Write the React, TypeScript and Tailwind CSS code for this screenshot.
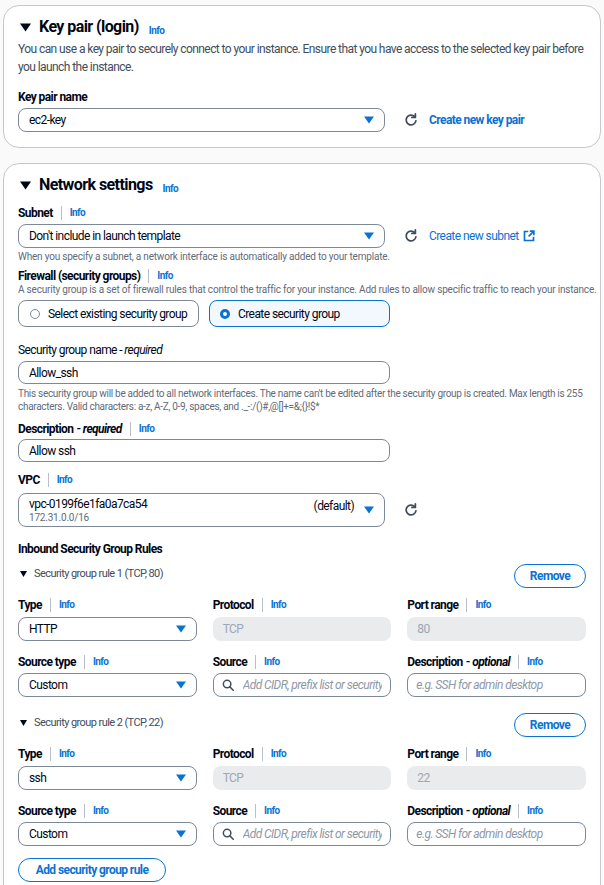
import React from "react";

const blue = "text-[#0972d3]";

function Info() {
  return <span className={`text-[10px] font-bold ${blue}`}>Info</span>;
}

function Label({ text, note, info = true }: { text: string; note?: string; info?: boolean }) {
  return (
    <div className="flex h-[14px] items-center whitespace-nowrap text-[12px] leading-[14px] text-[#000716]">
      <span className="font-bold">{text}</span>
      {note && <span className="ml-[3px] font-bold italic">- {note}</span>}
      {info && (
        <>
          <span className="mx-[8px] h-[14px] w-px bg-[#b6bec9]" />
          <Info />
        </>
      )}
    </div>
  );
}

function Caret() {
  return (
    <svg width="10" height="8" viewBox="0 0 10 8" className="shrink-0">
      <path d="M0 0.5h10L5 7.5z" fill="#0972d3" />
    </svg>
  );
}

function Refresh() {
  return (
    <svg width="14" height="14" viewBox="0 0 16 16" fill="none" className="shrink-0">
      <path d="M13.6 9a5.6 5.6 0 1 1-1.6-5" stroke="#414d5c" strokeWidth="2" strokeLinecap="round" />
      <path d="M13 1v4h-4" stroke="#414d5c" strokeWidth="2" strokeLinejoin="round" strokeLinecap="round" />
    </svg>
  );
}

function External() {
  return (
    <svg width="12" height="12" viewBox="0 0 16 16" fill="none" className="ml-[4px] shrink-0">
      <path d="M7 2H2v12h12V9" stroke="#0972d3" strokeWidth="2.2" />
      <path d="M9 1.5h5.5V7M14.5 1.5 7.5 8.5" stroke="#0972d3" strokeWidth="2.2" />
    </svg>
  );
}

function Search() {
  return (
    <svg width="12" height="12" viewBox="0 0 16 16" fill="none" className="shrink-0">
      <circle cx="6.8" cy="6.8" r="5" stroke="#414d5c" strokeWidth="2" />
      <path d="M10.5 10.5 15 15" stroke="#414d5c" strokeWidth="2" strokeLinecap="round" />
    </svg>
  );
}

function Select({ value, className = "" }: { value: string; className?: string }) {
  return (
    <div
      className={`flex h-[24px] items-center justify-between rounded-[8px] border border-[#7d8998] bg-white pl-[10px] pr-[10px] text-[12px] text-[#000716] ${className}`}
    >
      <span>{value}</span>
      <Caret />
    </div>
  );
}

function TextInput({ value, className = "" }: { value: string; className?: string }) {
  return (
    <div
      className={`flex h-[23px] items-center rounded-[8px] border border-[#7d8998] bg-white px-[10px] text-[12px] text-[#000716] ${className}`}
    >
      {value}
    </div>
  );
}

function Disabled({ value }: { value: string }) {
  return (
    <div className="flex h-[24px] items-center rounded-[8px] bg-[#e9ebed] px-[10px] text-[12px] text-[#9ba7b6]">
      {value}
    </div>
  );
}

function Placeholder({ text, search }: { text: string; search?: boolean }) {
  return (
    <div className="flex h-[24px] items-center gap-[9px] overflow-hidden whitespace-nowrap rounded-[8px] border border-[#7d8998] bg-white px-[8px] text-[12px] italic text-[#8d99a8]">
      {search && <Search />}
      <span className="overflow-hidden">{text}</span>
    </div>
  );
}

function RemoveButton() {
  return (
    <div className={`flex h-[24px] w-[72px] items-center justify-center rounded-full border-[1.5px] border-[#0972d3] text-[12px] font-bold ${blue}`}>
      Remove
    </div>
  );
}

function Rule({ n, port, type, first }: { n: number; port: string; type: string; first?: boolean }) {
  return (
    <div className={first ? "mt-[8px]" : "mt-[16px]"}>
      <div className="flex items-center justify-between">
        <div className="-mt-[4px] flex items-center gap-[7px] pl-[2px] text-[11px] text-[#414d5c]">
          <svg width="7" height="6" viewBox="0 0 7 6">
            <path d="M0 0h7L3.5 6z" fill="#000716" />
          </svg>
          <span>
            Security group rule {n} (TCP, {port})
          </span>
        </div>
        <RemoveButton />
      </div>
      <div className="mt-[10px] grid grid-cols-3 gap-x-[16px]">
        <Label text="Type" />
        <Label text="Protocol" />
        <Label text="Port range" />
        <Select value={type} className="mt-[5px]" />
        <div className="mt-[5px]">
          <Disabled value="TCP" />
        </div>
        <div className="mt-[5px]">
          <Disabled value={port} />
        </div>
      </div>
      <div className="mt-[14px] grid grid-cols-3 gap-x-[16px]">
        <Label text="Source type" />
        <Label text="Source" />
        <Label text="Description" note="optional" />
        <Select value="Custom" className="mt-[4px]" />
        <div className="mt-[4px]">
          <Placeholder search text="Add CIDR, prefix list or security group" />
        </div>
        <div className="mt-[4px]">
          <Placeholder text="e.g. SSH for admin desktop" />
        </div>
      </div>
    </div>
  );
}

function Heading({ title }: { title: string }) {
  return (
    <div className="flex h-[20px] items-center">
      <svg width="11" height="9" viewBox="0 0 11 9" className="ml-[2px]">
        <path d="M0 0.5h11L5.5 8.5z" fill="#000716" />
      </svg>
      <span className="ml-[8px] text-[16px] font-bold text-[#000716]">{title}</span>
      <span className="ml-[10px] mt-[3px]">
        <Info />
      </span>
    </div>
  );
}

const helper = "text-[10px] tracking-[-0.02em] text-[#5f6b7a]";

export default function App() {
  return (
    <div className="h-[885px] overflow-hidden bg-[#fafafa] px-[3px] pt-[5px] font-['Roboto',sans-serif] tracking-[-0.036em]">
      {/* Key pair */}
      <div className="rounded-[16px] border border-[#c6c6cd] bg-white px-[14px] pb-[15px] pt-[11px]">
        <Heading title="Key pair (login)" />
        <p className="mt-[3px] text-[12px] leading-[18px] text-[#414d5c]">
          You can use a key pair to securely connect to your instance. Ensure that you have access to the selected key pair before you launch the instance.
        </p>
        <div className="mt-[14px]">
          <Label text="Key pair name" info={false} />
        </div>
        <div className="mt-[4px] flex items-center">
          <Select value="ec2-key" className="w-[367px]" />
          <div className="ml-[19px]">
            <Refresh />
          </div>
          <span className={`ml-[11px] text-[12px] font-bold ${blue}`}>Create new key pair</span>
        </div>
      </div>

      {/* Network settings */}
      <div className="mt-[15px] rounded-t-[16px] border border-[#c6c6cd] bg-white px-[14px] pb-[20px] pt-[11px]">
        <Heading title="Network settings" />
        <div className="mt-[11px]">
          <Label text="Subnet" />
        </div>
        <div className="mt-[4px] flex items-center">
          <Select value="Don't include in launch template" className="w-[367px]" />
          <div className="ml-[19px]">
            <Refresh />
          </div>
          <span className={`ml-[11px] flex items-center text-[12px] ${blue}`}>
            Create new subnet
            <External />
          </span>
        </div>
        <p className={`mt-[3px] leading-[12px] ${helper}`}>
          When you specify a subnet, a network interface is automatically added to your template.
        </p>
        <div className="mt-[6px]">
          <Label text="Firewall (security groups)" />
        </div>
        <p className={`mt-[1px] whitespace-nowrap leading-[12px] ${helper}`}>
          A security group is a set of firewall rules that control the traffic for your instance. Add rules to allow specific traffic to reach your instance.
        </p>
        <div className="mt-[4px] flex gap-[10px]">
          <div className="flex h-[27px] w-[181px] items-center gap-[8px] whitespace-nowrap rounded-[8px] border border-[#7d8998] px-[11px] text-[12px] text-[#000716]">
            <span className="h-[10px] w-[10px] shrink-0 rounded-full border border-[#7d8998]" />
            Select existing security group
          </div>
          <div className="flex h-[27px] w-[181px] items-center gap-[8px] whitespace-nowrap rounded-[8px] border-[1.5px] border-[#0972d3] bg-[#f2f8fd] px-[10px] text-[12px] text-[#000716]">
            <span className="h-[10px] w-[10px] shrink-0 rounded-full border-[3px] border-[#0972d3] bg-white" />
            Create security group
          </div>
        </div>

        <div className="mt-[16px] flex h-[14px] items-center text-[12px] text-[#000716]">
          Security group name&nbsp;<span className="italic">- required</span>
        </div>
        <TextInput value="Allow_ssh" className="mt-[4px] w-[372px]" />
        <p className="mt-[3px] whitespace-nowrap text-[10px] leading-[13px] tracking-[-0.03em] text-[#5f6b7a]">
          This security group will be added to all network interfaces. The name can't be edited after the security group is created. Max length is 255
          <br />
          characters. Valid characters: a-z, A-Z, 0-9, spaces, and ._-:/()#,@[]+=&amp;;{"{}"}!$*
        </p>
        <div className="mt-[9px]">
          <Label text="Description" note="required" />
        </div>
        <TextInput value="Allow ssh" className="mt-[3px] w-[372px]" />
        <div className="mt-[11px]">
          <Label text="VPC" />
        </div>
        <div className="mt-[6px] flex items-center">
          <div className="flex h-[34px] w-[367px] items-center justify-between rounded-[8px] border border-[#7d8998] pl-[10px] pr-[10px]">
            <div className="flex flex-col">
              <span className="text-[12px] leading-[15px] text-[#000716]">vpc-0199f6e1fa0a7ca54</span>
              <span className={`leading-[12px] ${helper}`}>172.31.0.0/16</span>
            </div>
            <div className="flex items-center gap-[10px]">
              <span className="-mt-[8px] text-[12px] text-[#000716]">(default)</span>
              <Caret />
            </div>
          </div>
          <div className="ml-[19px]">
            <Refresh />
          </div>
        </div>

        <div className="mt-[15px] flex h-[14px] items-center text-[12px] font-bold text-[#000716]">
          Inbound Security Group Rules
        </div>
        <Rule n={1} port="80" type="HTTP" first />
        <Rule n={2} port="22" type="ssh" />
        <div className={`mt-[12px] flex h-[24px] w-[148px] items-center justify-center rounded-full border-[1.5px] border-[#0972d3] text-[12px] font-bold ${blue}`}>
          Add security group rule
        </div>
      </div>
    </div>
  );
}
